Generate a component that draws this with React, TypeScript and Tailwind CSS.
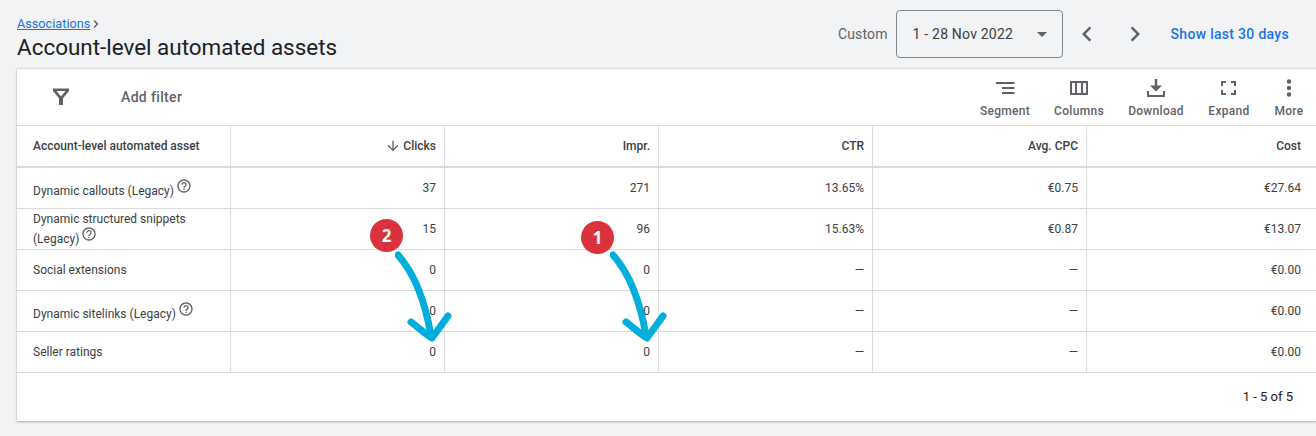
import React from "react";
import { ChevronRight } from "lucide-react";

const Help = () => (
  <svg viewBox="0 0 24 24" className="-my-1 ml-[2px] inline-block h-[16px] w-[16px] align-[5px] fill-[#5f6368]">
    <path d="M11 18h2v-2h-2v2zm1-16C6.48 2 2 6.48 2 12s4.48 10 10 10 10-4.48 10-10S17.52 2 12 2zm0 18c-4.41 0-8-3.59-8-8s3.59-8 8-8 8 3.59 8 8-3.59 8-8 8zm0-14c-2.21 0-4 1.79-4 4h2c0-1.1.9-2 2-2s2 .9 2 2c0 2-3 1.75-3 5h2c0-2.25 3-2.5 3-5 0-2.21-1.79-4-4-4z" />
  </svg>
);

const tools = [
  {
    label: "Segment",
    width: "w-[50px]",
    icon: <path d="M3 6h18.5v2H3zM9 11h12.5v2H9zM9 16h12.5v2H9z" />,
  },
  {
    label: "Columns",
    width: "w-[50px]",
    icon: <path fillRule="evenodd" d="M3 5h18v14H3zM5 7v10h3V7zm5 0v10h4V7zm6 0v10h3V7z" />,
  },
  {
    label: "Download",
    width: "w-[56px]",
    icon: <path d="M10.8 3h2.4v6.5H18L12 15.5 6 9.5h4.8zM3 15h2v4h14v-4h2v6H3z" />,
  },
  {
    label: "Expand",
    width: "w-[42px]",
    icon: <path d="M4 5h5v2H6v3H4zM14 5h5v5h-2V7h-3zM4 14h2v3h3v2H4zM17 14h2v5h-5v-2h3z" />,
  },
  {
    label: "More",
    width: "ml-[1px] w-[28px]",
    icon: (
      <>
        <circle cx="12" cy="5.5" r="2.2" />
        <circle cx="12" cy="12" r="2.2" />
        <circle cx="12" cy="18.5" r="2.2" />
      </>
    ),
  },
];

const columns = ["Clicks", "Impr.", "CTR", "Avg. CPC", "Cost"];

const rows = [
  { name: "Dynamic callouts (Legacy)", help: true, cells: ["37", "271", "13.65%", "€0.75", "€27.64"] },
  { name: "Dynamic structured snippets (Legacy)", help: true, wrap: true, cells: ["15", "96", "15.63%", "€0.87", "€13.07"] },
  { name: "Social extensions", help: false, cells: ["0", "0", "—", "—", "€0.00"] },
  { name: "Dynamic sitelinks (Legacy)", help: true, cells: ["0", "0", "—", "—", "€0.00"] },
  { name: "Seller ratings", help: false, cells: ["0", "0", "—", "—", "€0.00"] },
];

const gridCols = "grid grid-cols-[214px_214px_214px_214px_214px_1fr]";

const Arrow = ({ className }: { className: string }) => (
  <svg viewBox="0 0 60 95" className={`absolute h-[95px] w-[60px] fill-none stroke-[#00aedb] ${className}`}>
    <path d="M3 5 C 18 22, 30 50, 36 86" strokeWidth="7" strokeLinecap="round" />
    <path d="M16 72 C 24 78, 30 84, 37 88 C 42 81, 48 73, 53 66" strokeWidth="7" strokeLinecap="round" strokeLinejoin="round" />
  </svg>
);

const Badge = ({ n, className }: { n: string; className: string }) => (
  <div className={`absolute flex h-[33px] w-[33px] items-center justify-center rounded-full bg-[#d9323c] font-['Open_Sans',sans-serif] text-[17px] font-bold text-white ${className}`}>
    {n}
  </div>
);

const Chevron = ({ d, className }: { d: string; className: string }) => (
  <svg viewBox="0 0 24 24" className={`h-[30px] w-[30px] fill-[#5f6368] ${className}`}>
    <path d={d} />
  </svg>
);

export default function App() {
  return (
    <div className="h-[436px] w-[1316px] overflow-hidden bg-[#f1f3f4] font-['Roboto',sans-serif] text-[#3c4043]">
      <div className="flex h-[68px] items-start justify-between pl-[17px] pr-[27px]">
        <div className="pt-[16px]">
          <div className="flex h-[15px] items-center text-[12.7px] leading-[15px] text-[#1a73e8]">
            <span className="underline">Associations</span>
            <ChevronRight className="h-[12px] w-[12px] text-[#5f6368]" strokeWidth={3} />
          </div>
          <h1 className="mt-[2px] text-[22.45px] leading-[28px] font-normal text-[#202124]">Account-level automated assets</h1>
        </div>
        <div className="flex items-center pt-[10px]">
          <span className="text-[14px] tracking-[0.15px] text-[#5f6368]">Custom</span>
          <button className="ml-[8px] flex h-[48px] w-[167px] items-center justify-between rounded-[4px] border border-[#80868b] pl-[16px] pr-[15px] text-[14px] tracking-[0.2px] text-[#3c4043]">
            1 - 28 Nov 2022
            <span className="h-0 w-0 border-x-[5px] border-t-[5px] border-x-transparent border-t-[#5f6368]" />
          </button>
          <Chevron className="ml-[9px]" d="M15.41 7.41L14 6l-6 6 6 6 1.41-1.41L10.83 12z" />
          <Chevron className="ml-[18px]" d="M10 6L8.59 7.41 13.17 12l-4.58 4.59L10 18l6-6z" />
          <span className="ml-[21px] text-[14px] font-medium tracking-[0.3px] text-[#1a73e8]">Show last 30 days</span>
        </div>
      </div>

      <div className="relative ml-[17px] h-[353px] bg-white shadow-[0_1px_2px_rgba(60,64,67,0.4)]">
        <div className="flex h-[58px] items-center justify-between border-y border-[#dadce0] pl-[32px] pr-[13px]">
          <div className="flex items-center text-[#5f6368]">
            <svg viewBox="0 0 24 24" className="h-[24px] w-[24px] fill-[#5f6368]">
              <path fillRule="evenodd" d="M4 3.5h16V6l-6 7.2V20h-4v-6.8L4 6zM7.5 6 12 11.4 16.5 6z" />
            </svg>
            <span className="ml-[48px] text-[14px] font-medium tracking-[0.35px]">Add filter</span>
          </div>
          <div className="flex items-start gap-[24px] pt-[1px]">
            {tools.map((t) => (
              <div key={t.label} className={`flex flex-col items-center ${t.width}`}>
                <svg viewBox="0 0 24 24" className="h-[24px] w-[24px] fill-[#5f6368]">
                  {t.icon}
                </svg>
                <span className="mt-[3px] whitespace-nowrap text-[12px] leading-[16px] font-medium tracking-[0.3px] text-[#5f6368]">{t.label}</span>
              </div>
            ))}
          </div>
        </div>

        <div className={`${gridCols} h-[42px] border-b-2 border-[#dadce0] text-[12px] font-medium text-[#3c4043]`}>
          <div className="flex items-center border-r border-[#dadce0] pl-[16px]">Account-level automated asset</div>
          {columns.map((c, i) => (
            <div key={c} className={`flex items-center justify-end ${i < 4 ? "border-r border-[#dadce0] pr-[8px]" : "pr-[15px]"}`}>
              {i === 0 && (
                <svg viewBox="0 0 24 24" className="mr-[2px] h-[16px] w-[16px] fill-[#5f6368]">
                  <path d="M20 12l-1.41-1.41L13 16.17V4h-2v12.17l-5.58-5.59L4 12l8 8 8-8z" />
                </svg>
              )}
              {c}
            </div>
          ))}
        </div>

        {rows.map((r) => (
          <div key={r.name} className={`${gridCols} h-[41px] border-b border-[#dadce0] text-[12px] text-[#3c4043]`}>
            <div className="flex items-center border-r border-[#dadce0] pl-[16px] pr-[20px] leading-[20px]">
              <div className={r.help ? (r.wrap ? "" : "pt-[6px]") : ""}>
                {r.name}
                {r.help && <Help />}
              </div>
            </div>
            {r.cells.map((c, i) => (
              <div key={i} className={`flex items-center justify-end ${i < 4 ? "border-r border-[#dadce0] pr-[8px]" : "pr-[15px]"}`}>
                {c}
              </div>
            ))}
          </div>
        ))}

        <div className="flex h-[48px] items-center justify-end pr-[23px] text-[13px] text-[#202124]">1 - 5 of 5</div>

        <Badge n="2" className="left-[353px] top-[151px]" />
        <Arrow className="left-[378px] top-[182px]" />
        <Badge n="1" className="left-[564px] top-[153px]" />
        <Arrow className="left-[593px] top-[182px]" />
      </div>
    </div>
  );
}
